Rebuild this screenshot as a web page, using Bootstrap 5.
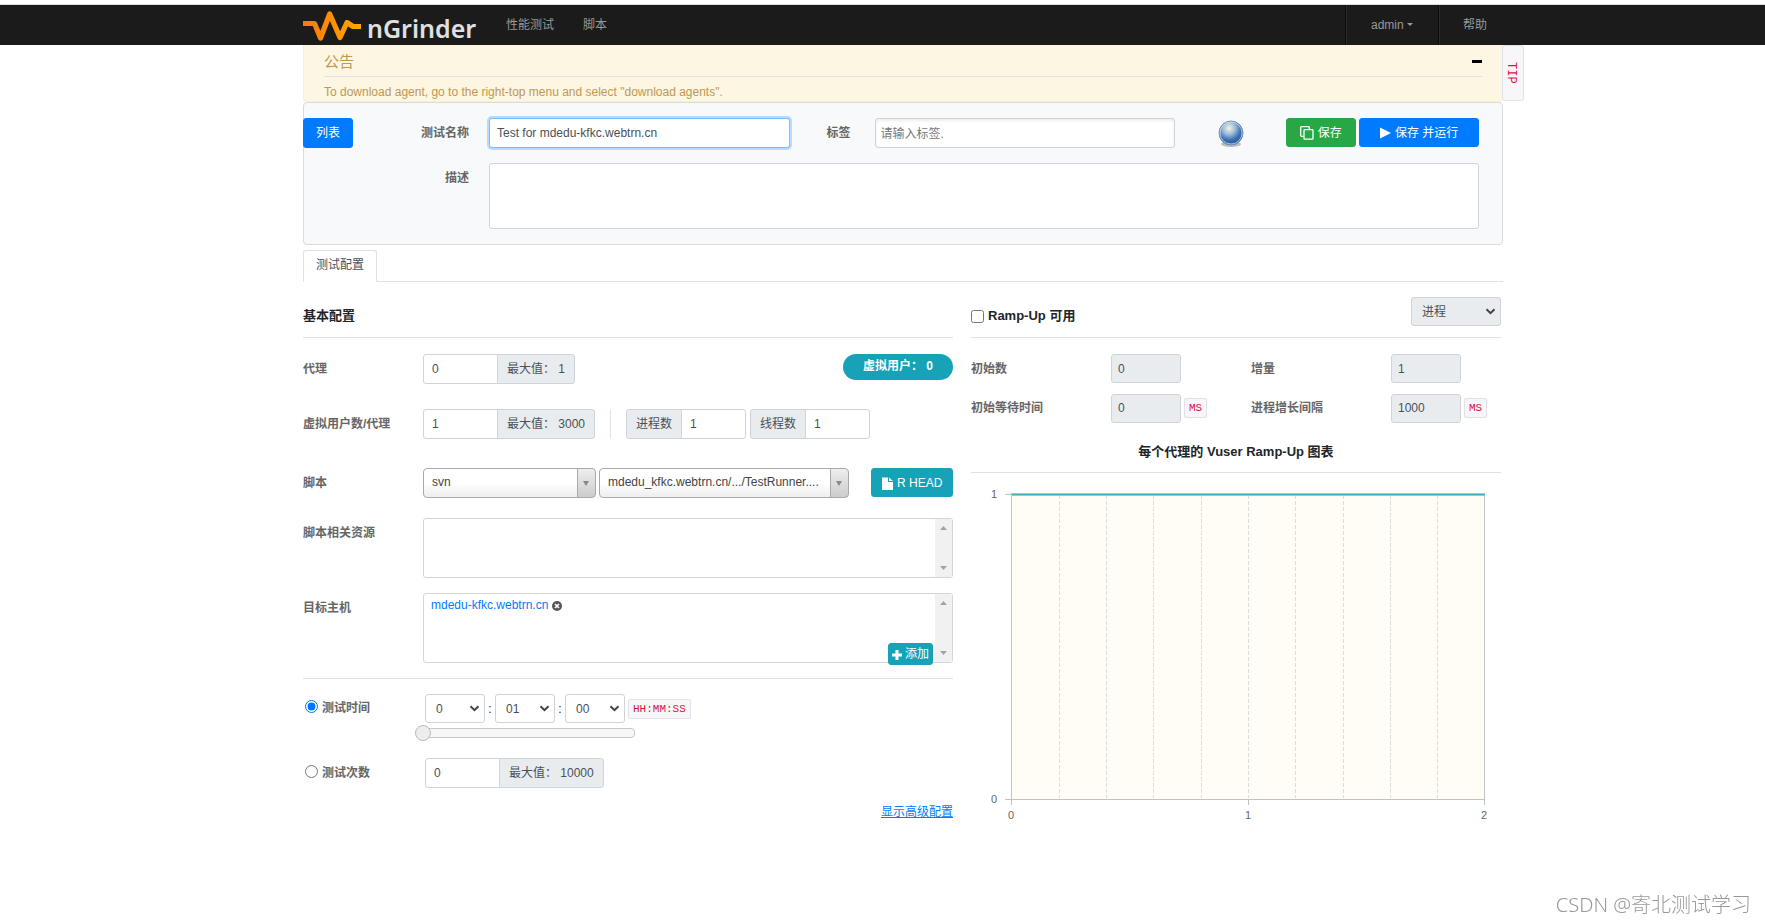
<!DOCTYPE html>
<html lang="zh-CN">
<head>
<meta charset="utf-8">
<meta name="viewport" content="width=device-width, initial-scale=1">
<title>nGrinder</title>
<link href="https://cdn.jsdelivr.net/npm/bootstrap@5.3.0/dist/css/bootstrap.min.css" rel="stylesheet">
<style>
  body { font-family: "Liberation Sans", "Noto Sans CJK SC", sans-serif; font-size: 12px; line-height: 18px; color: #212529; background: #fff; }
  a { color: #007bff; }
  .shell { padding-left: 41px; }
  .inner { max-width: 1200px; margin: 0 auto; }

  .topbar { margin-top: 4px; border-top: 1px solid #ddd; background: #1b1b1b; padding-top: 0; padding-bottom: 0; }
  .topbar .inner { height: 40px; width: 100%; }
  .topbar .nav-link { color: #999; padding: 0; line-height: 40px; }
  .main-nav { gap: 29px; margin-left: 25px; }
  .logo { width: 178px; }
  .brand-text { font: 600 25px/38px "Noto Sans", "Open Sans", sans-serif; color: #e0e0e0; }
  .top-cell { border-left: 1px solid #0c0c0c; box-shadow: inset 1px 0 #2b2b2b; height: 40px; }
  .cell-user { width: 93px; }
  .caret { display: inline-block; border: 3px solid transparent; border-top-color: #999; border-bottom: 0; vertical-align: 3px; }

  .notice { background: #fdf6e3; border: 1px solid #fbeed5; border-top: 0; border-radius: 0 0 4px 4px; color: #c09853; padding: 0 20px; }
  .notice-head { border-bottom: 1px solid #dee2e6; height: 32px; padding-top: 2px; font-size: 15px; }
  .notice-text { padding-top: 6px; }
  .fold { width: 10px; height: 3px; background: #000; border: 0; padding: 0; }
  .tip-tab { position: absolute; left: 100%; top: 0; width: 22px; height: 56px; border: 1px solid #e1e1e8; border-radius: 3px; background: #f7f7f9; writing-mode: vertical-rl; font: 12px/24px "Liberation Mono", monospace; color: #d14; text-decoration: none; text-align: center; }

  .head-card { background: #f8f9fb; border: 1px solid #d9dbde; border-radius: 4px; padding: 15px 23px 15px 0; }
  .list-btn { width: 50px; margin-left: -1px; }
  .name-label { width: 136px; padding-right: 20px; }
  .memo-row { margin-top: 15px; padding-left: 49px; }
  .tag-label { width: 85px; padding-right: 24px; }
  .globe-cell { width: 111px; padding-top: 2px; }
  .grow-even { flex: 1 1 0; }
  .lab { font-weight: bold; color: #666; line-height: 30px; }
  .form-control, .form-select, .input-group-text { font-size: 12px; line-height: 18px; color: #495057; border-color: #ced4da; border-radius: 3px; }
  .form-control { height: 30px; padding: 5px 8px; }
  .form-control:disabled, .form-select:disabled, .input-group-text { background-color: #e9ecef; }
  .name-input { border-color: #80bdff; box-shadow: 0 0 0 2px #b9dafc; padding: 5px 7px; }
  .tag-input { box-shadow: inset 0 2px 3px #eee; padding: 6px 5px 4px; }
  .tag-input::placeholder { color: #777; }
  .memo { height: 66px; resize: none; }
  .btn { font-size: 12px; line-height: 18px; padding: 5px 12px; border-radius: 3px; color: #fff; }
  .btn-blue { background: #007bff; border-color: #007bff; }
  .btn-green { background: #28a745; border-color: #28a745; }
  .btn-teal { background: #17a2b8; border-color: #17a2b8; }
  .btn-bar { height: 29px; padding: 0; }
  .save-btn { width: 70px; } .run-btn { width: 120px; margin-left: 3px; } .head-btn { width: 82px; }

  .nav-tabs { border-bottom: 1px solid #dee2e6; margin-top: 5px; }
  .nav-tabs .nav-link.active { padding: 5px 12px 7px; color: #495057; border-radius: 3px 3px 0 0; line-height: 18px; }

  .split { display: grid; grid-template-columns: 650fr 530fr; column-gap: 18px; padding-right: 2px; }
  .sec-head { height: 56px; padding: 15px 0 2px; border-bottom: 1px solid #dee2e6; font-size: 13px; font-weight: bold; margin-bottom: 16px; }
  .row-lab { width: 120px; flex: none; }
  .row-lab.pick { width: 122px; padding-left: 2px; line-height: 29px; }
  .pick input { width: 13px; height: 13px; margin: 0 4px 4px 0; }
  .ig { width: auto; flex: none; }
  .ig > .form-control.num { width: 75px; flex: none; }
  .ig.ig-small { width: 120px; }
  .input-group-text { padding: 5px 9px; height: 30px; }
  .v-rule { width: 1px; height: 30px; background: #dee2e6; margin: 0 15px; }
  .vuser { width: 110px; height: 26px; border-radius: 13px; background: #17a2b8; color: #fff; font-weight: bold; line-height: 24px; text-align: center; }
  .picker { height: 30px; appearance: none; border: 1px solid #aaa; border-radius: 4px; color: #444; padding: 0 24px 3px 8px;
    background: url("data:image/svg+xml,%3Csvg xmlns='http://www.w3.org/2000/svg' width='18' height='28'%3E%3Cdefs%3E%3ClinearGradient id='g' x2='0' y2='1'%3E%3Cstop stop-color='%23eee'/%3E%3Cstop offset='1' stop-color='%23ccc'/%3E%3C/linearGradient%3E%3C/defs%3E%3Cpath fill='url(%23g)' d='M0 0h18v28H0z'/%3E%3Cpath fill='%23aaa' d='M0 0h1v28H0z'/%3E%3Cpath fill='%23888' d='M6 12h6l-3 5z'/%3E%3C/svg%3E") right top no-repeat, linear-gradient(#fff 50%, #eee); }
  .w-svn { width: 173px; } .w-script { width: 250px; margin-left: 3px; }
  .list-area { border: 1px solid #d3d6d9; border-radius: 3px; position: relative; padding: 2px 24px 0 7px; }
  .h-60 { height: 60px; } .h-70 { height: 70px; }
  .gutter { position: absolute; right: 0; top: 0; bottom: 0; width: 17px; background: #f1f1f1; padding: 7px 5px; }
  .arrow-up, .arrow-dn { width: 7px; height: 4px; background: #a3a3a3; clip-path: polygon(50% 0, 100% 100%, 0 100%); }
  .arrow-dn { clip-path: polygon(0 0, 100% 0, 50% 100%); }
  .add-btn { position: absolute; right: 19px; bottom: -3px; height: 22px; padding: 0 3px; }
  .form-select { height: 29px; padding: 4px 20px 4px 10px; background-position: right 4px center; background-size: 11px 7px;
    background-image: url("data:image/svg+xml,%3Csvg xmlns='http://www.w3.org/2000/svg' viewBox='0 0 11 7'%3E%3Cpath d='M1.5 1.2l4 4 4-4' fill='none' stroke='%23444' stroke-width='2'/%3E%3C/svg%3E"); }
  .w-time { width: 60px; } .w-mode { width: 90px; align-self: flex-start; }
  .colon { width: 10px; text-align: center; }
  .unit { font: 11px/18px "Liberation Mono", monospace; color: #d14; background: #f7f7f9; border: 1px solid #e1e1e8; border-radius: 2px; padding: 0 4px; margin-left: 3px; }
  .duration { appearance: none; display: block; width: 214px; height: 16px; margin: 2px 0 17px 118px; background: none; }
  .duration::-webkit-slider-runnable-track { height: 10px; border: 1px solid #c8c8c8; border-radius: 4px; background: #f7f7f7; }
  .duration::-webkit-slider-thumb { appearance: none; width: 16px; height: 16px; margin: -4px 0 0 -7px; border: 1px solid #bbb; border-radius: 50%; background: #ededed; }
  .rows-20 { margin-top: 20px; } .rows-25 { margin-top: 25px; } .rows-29 { margin-top: 29px; } .rows-15 { margin-top: 15px; }
  .ramp-grid { display: grid; grid-template-columns: 140fr 140fr 140fr 110fr; row-gap: 9px; }
  .ramp-grid .form-control { width: 70px; height: 29px; padding: 4px 6px; }
  .chart-title { font-size: 13px; font-weight: bold; text-align: center; padding: 20px 0 11px; border-bottom: 1px solid #dee2e6; }
  .chart text { font-size: 11px; fill: #666; }
  .watermark { position: fixed; right: 14px; bottom: 4px; font: 20px/28px "Noto Sans", "Noto Sans CJK SC", sans-serif; font-weight: 300; color: #999; }
</style>
</head>
<body>
<nav class="topbar shell navbar">
  <div class="inner d-flex">
    <a href="#" class="logo d-flex text-decoration-none" aria-label="nGrinder">
      <svg width="60" height="40" viewBox="0 0 60 40" class="flex-shrink-0">
        <defs><linearGradient id="zig"><stop stop-color="#ff7800"/><stop offset="1" stop-color="#ffa800"/></linearGradient></defs>
        <path d="M0 18.500H11.500L17.500 33L26.700 9L37 32.500L44 17.500L50 21.500H58" fill="none" stroke="url(#zig)" stroke-width="5.200" stroke-linejoin="round"/>
      </svg>
      <span class="brand-text ps-1 pt-1">nGrinder</span>
    </a>
    <div class="main-nav d-flex">
      <a class="nav-link" href="#">性能测试</a>
      <a class="nav-link" href="#">脚本</a>
    </div>
    <div class="ms-auto d-flex">
      <div class="top-cell cell-user text-center"><a class="nav-link" href="#">admin <span class="caret"></span></a></div>
      <div class="top-cell ps-4 pe-3"><a class="nav-link" href="#">帮助</a></div>
    </div>
  </div>
</nav>

<div class="shell">
<main class="inner">
  <section class="notice position-relative">
    <div class="notice-head d-flex align-items-center justify-content-between">
      <span>公告</span><button type="button" class="fold" aria-label="收起"></button>
    </div>
    <div class="notice-text">To download agent, go to the right-top menu and select "download agents".</div>
    <a href="#" class="tip-tab">TIP</a>
  </section>

  <section class="head-card">
    <div class="d-flex">
      <button type="button" class="btn btn-blue px-0 list-btn">列表</button>
      <label class="lab name-label text-end" for="tname">测试名称</label>
      <div class="grow-even"><input id="tname" class="form-control name-input" value="Test for mdedu-kfkc.webtrn.cn"></div>
      <label class="lab tag-label text-end" for="tags">标签</label>
      <div class="grow-even"><input id="tags" class="form-control tag-input" placeholder="请输入标签."></div>
      <div class="globe-cell">
        <svg width="28" height="28" viewBox="0 0 28 28" class="d-block mx-auto">
          <defs><radialGradient id="ball" cx=".42" cy=".3" r=".7"><stop stop-color="#f4f5df"/><stop offset=".35" stop-color="#a4bedb"/><stop offset=".7" stop-color="#3b70b4"/><stop offset="1" stop-color="#2c579a"/></radialGradient></defs>
          <ellipse cx="14" cy="24" rx="10" ry="3" fill="#bbb"/>
          <circle cx="14" cy="13" r="12" fill="url(#ball)" stroke="#6d8fbd"/>
          <circle cx="14" cy="13" r="11" fill="none" stroke="#dce8f5" stroke-width=".7"/>
        </svg>
      </div>
      <button type="button" class="btn btn-green btn-bar save-btn"><svg width="14" height="14" viewBox="0 0 14 14" fill="none" stroke="#fff" stroke-width="1.300"><path d="M3.500 10.300H1.500a.8.800 0 0 1-.8-.8V1.500a.8.800 0 0 1 .8-.8H8.500a.8.800 0 0 1 .8.800V3.500"/><rect x="4" y="3.700" width="9" height="9.500" rx=".8"/></svg> 保存</button>
      <button type="button" class="btn btn-blue btn-bar run-btn"><svg width="12" height="12" viewBox="0 0 12 12"><path d="M0 .5L11 6L0 11.500z" fill="#fff"/></svg> 保存 并运行</button>
    </div>
    <div class="d-flex memo-row">
      <label class="lab name-label text-end flex-shrink-0" for="memo">描述</label>
      <textarea id="memo" class="form-control memo"></textarea>
    </div>
  </section>

  <ul class="nav nav-tabs"><li class="nav-item"><a class="nav-link active" href="#">测试配置</a></li></ul>

  <div class="split">
    <section>
      <div class="sec-head d-flex align-items-center">基本配置</div>

      <div class="d-flex">
        <label class="lab row-lab" for="agent">代理</label>
        <div class="input-group ig"><input id="agent" class="form-control num" value="0"><span class="input-group-text">最大值： 1</span></div>
        <div class="vuser ms-auto">虚拟用户： 0</div>
      </div>

      <div class="d-flex rows-25">
        <label class="lab row-lab" for="vu">虚拟用户数/代理</label>
        <div class="input-group ig"><input id="vu" class="form-control num" value="1"><span class="input-group-text">最大值： 3000</span></div>
        <div class="v-rule"></div>
        <div class="input-group ig ig-small"><label class="input-group-text" for="proc">进程数</label><input id="proc" class="form-control" value="1"></div>
        <div class="input-group ig ig-small ms-1"><label class="input-group-text" for="thr">线程数</label><input id="thr" class="form-control" value="1"></div>
      </div>

      <div class="d-flex rows-29">
        <label class="lab row-lab" for="script">脚本</label>
        <select class="picker w-svn" aria-label="类型"><option>svn</option></select>
        <select id="script" class="picker w-script"><option>mdedu_kfkc.webtrn.cn/.../TestRunner....</option></select>
        <button type="button" class="btn btn-teal btn-bar ms-auto head-btn"><svg width="12" height="13" viewBox="0 0 12 13" fill="#fff"><path d="M0 .5H6V5H11V13H0zM7 .5L11 4H7z"/></svg> R HEAD</button>
      </div>

      <div class="d-flex rows-20">
        <span class="lab row-lab">脚本相关资源</span>
        <div class="list-area flex-fill h-60">
          <div class="gutter d-flex flex-column justify-content-between"><i class="arrow-up"></i><i class="arrow-dn"></i></div>
        </div>
      </div>

      <div class="d-flex rows-15">
        <span class="lab row-lab">目标主机</span>
        <div class="list-area flex-fill h-70">
          <a href="#" class="text-decoration-none">mdedu-kfkc.webtrn.cn</a>
          <svg width="10" height="10" viewBox="0 0 10 10"><circle cx="5" cy="5" r="5" fill="#555"/><path d="M3 3l4 4M7 3l-4 4" stroke="#fff" stroke-width="1.700"/></svg>
          <div class="gutter d-flex flex-column justify-content-between"><i class="arrow-up"></i><i class="arrow-dn"></i></div>
          <button type="button" class="btn btn-teal add-btn"><svg width="10" height="10" viewBox="0 0 10 10"><path d="M5 0v10M0 5h10" stroke="#fff" stroke-width="3"/></svg> 添加</button>
        </div>
      </div>

      <div class="border-top rows-15"></div>

      <div class="d-flex align-items-center rows-15">
        <label class="lab row-lab pick d-flex align-items-center"><input type="radio" name="kind" checked>测试时间</label>
        <select class="form-select w-time" aria-label="时"><option>0</option></select><span class="colon">:</span>
        <select class="form-select w-time" aria-label="分"><option>01</option></select><span class="colon">:</span>
        <select class="form-select w-time" aria-label="秒"><option>00</option></select>
        <span class="unit">HH:MM:SS</span>
      </div>
      <input type="range" class="duration" value="0" aria-label="测试时间">

      <div class="d-flex">
        <label class="lab row-lab pick d-flex align-items-center"><input type="radio" name="kind">测试次数</label>
        <div class="input-group ig"><input class="form-control num" value="0" aria-label="测试次数"><span class="input-group-text">最大值： 10000</span></div>
      </div>
      <div class="text-end rows-15"><a href="#">显示高级配置</a></div>
    </section>

    <section>
      <div class="sec-head d-flex align-items-center">
        <label class="pick d-flex align-items-center"><input type="checkbox" class="mb-0">Ramp-Up 可用</label>
        <select class="form-select w-mode ms-auto" disabled aria-label="模式"><option>进程</option></select>
      </div>
      <div class="ramp-grid">
        <label class="lab" for="r1">初始数</label><div><input id="r1" class="form-control" disabled value="0"></div>
        <label class="lab" for="r2">增量</label><div><input id="r2" class="form-control" disabled value="1"></div>
        <label class="lab" for="r3">初始等待时间</label><div class="d-flex align-items-center"><input id="r3" class="form-control" disabled value="0"><span class="unit">MS</span></div>
        <label class="lab" for="r4">进程增长间隔</label><div class="d-flex align-items-center"><input id="r4" class="form-control" disabled value="1000"><span class="unit">MS</span></div>
      </div>
      <div class="chart-title">每个代理的 Vuser Ramp-Up 图表</div>
      <svg class="chart d-block w-100" viewBox="0 0 530 355">
        <path d="M41 21H513V326H41z" fill="#fffdf6"/>
        <path d="M88.500 22V325M135.500 22V325M182.500 22V325M230.500 22V325M277.500 22V325M324.500 22V325M372.500 22V325M419.500 22V325M466.500 22V325" stroke="#ddd" stroke-dasharray="4 2"/>
        <path d="M40.500 20V332M513.500 20V332M34 21.500H41M34 326.500H514M277.500 327V332" fill="none" stroke="#c2c2c2"/>
        <path d="M41 21.500H514" stroke="#9cc" stroke-width="3"/><path d="M41 21.500H514" stroke="#3fb0c4"/>
        <text x="26" y="25" text-anchor="end">1</text><text x="26" y="330" text-anchor="end">0</text>
        <text x="40" y="346" text-anchor="middle">0</text><text x="277" y="346" text-anchor="middle">1</text><text x="513" y="346" text-anchor="middle">2</text>
      </svg>
    </section>
  </div>
</main>
</div>
<div class="watermark">CSDN @寄北测试学习</div>
<script src="https://cdn.jsdelivr.net/npm/bootstrap@5.3.0/dist/js/bootstrap.bundle.min.js"></script>
</body>
</html>
